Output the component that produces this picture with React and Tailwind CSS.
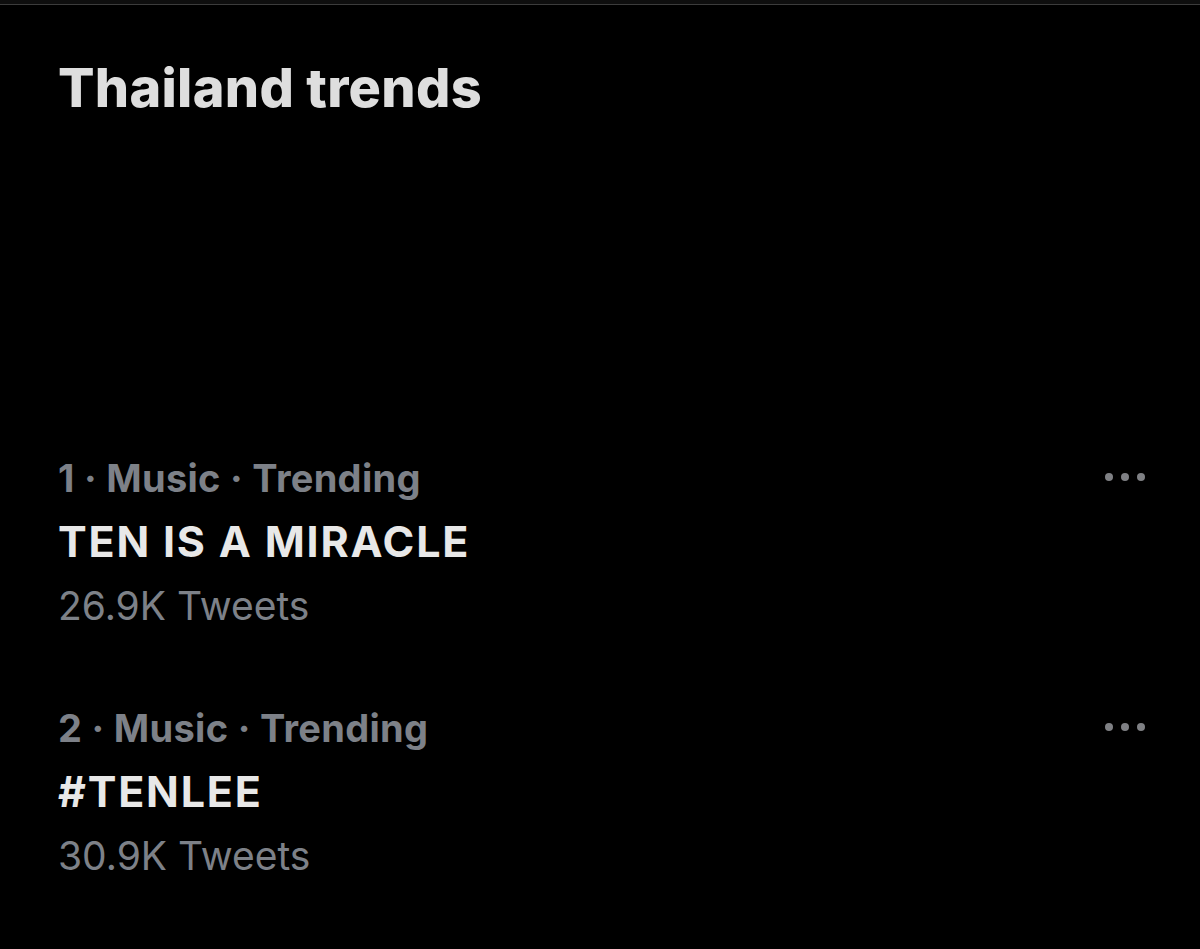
const trends = [
  { rank: 1, category: 'Music', name: 'TEN IS A MIRACLE', tweets: '26.9K Tweets' },
  { rank: 2, category: 'Music', name: '#TENLEE', tweets: '30.9K Tweets' },
]

function MoreDots() {
  return (
    <div className="flex gap-[8px] mt-[19px] self-start">
      <span className="w-[8px] h-[8px] rounded-full bg-[#7f8084]" />
      <span className="w-[8px] h-[8px] rounded-full bg-[#7f8084]" />
      <span className="w-[8px] h-[8px] rounded-full bg-[#7f8084]" />
    </div>
  )
}

export default function App() {
  return (
    <div className="w-[1200px] h-[949px] bg-black overflow-hidden font-['Inter',sans-serif]">
      <div className="h-[4px] bg-[#0e0e0e]" />
      <div className="h-px bg-[#3c3c3c]" />

      <div className="pl-[58px] pr-[55px] pt-[53px]">
        <h1 className="text-[54px] leading-[60px] font-extrabold tracking-[0.3px] text-[#dedede]">Thailand trends</h1>

        <div className="mt-[336px] flex flex-col gap-[74px]">
          {trends.map((t) => (
            <div key={t.rank} className="flex justify-between">
              <div className="flex flex-col">
                <div className="text-[38px] leading-[48px] font-bold tracking-[0.3px] text-[#7d8188]">
                  {t.rank} · {t.category} · Trending
                </div>
                <div className="mt-[13px] text-[43px] leading-[52px] font-bold tracking-[1.8px] text-[#e8e8e8]">
                  {t.name}
                </div>
                <div className="mt-[15px] text-[39px] leading-[48px] text-[#7d8188]">
                  {t.tweets}
                </div>
              </div>
              <MoreDots />
            </div>
          ))}
        </div>
      </div>
    </div>
  )
}
